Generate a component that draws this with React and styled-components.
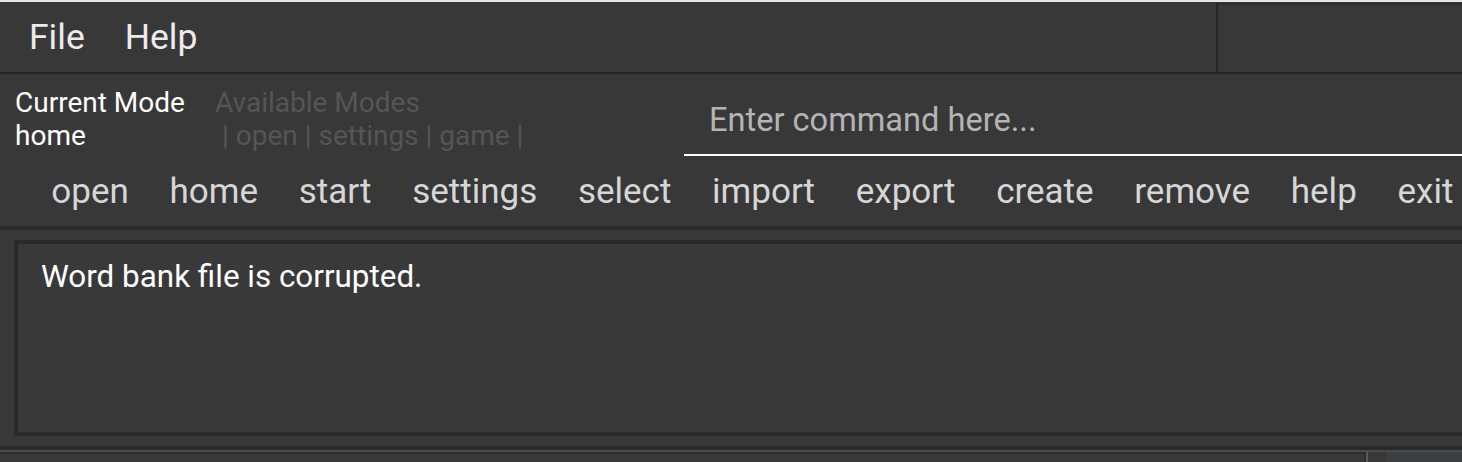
import React from "react";
import styled, { createGlobalStyle } from "styled-components";

const GlobalStyle = createGlobalStyle`
  html, body {
    margin: 0;
    padding: 0;
    background: #383838;
    overflow: hidden;
  }
  body {
    font-family: Roboto, "Liberation Sans", sans-serif;
  }
`;

const MODES = ["open", "settings", "game"];
const COMMANDS = [
  "open",
  "home",
  "start",
  "settings",
  "select",
  "import",
  "export",
  "create",
  "remove",
  "help",
  "exit",
];

export default function App() {
  return (
    <Window>
      <GlobalStyle />
      <TopEdge />
      <MenuBar>
        <MenuItems>
          <MenuItem>File</MenuItem>
          <MenuItem>Help</MenuItem>
        </MenuItems>
        <MenuSide />
      </MenuBar>

      <Toolbar>
        <TopRow>
          <ModeInfo>
            <ModeText>Current Mode</ModeText>
            <ModeText muted>Available Modes</ModeText>
            <ModeText>home</ModeText>
            <ModeText muted indent>
              | {MODES.join(" | ")} |
            </ModeText>
          </ModeInfo>
          <CommandBox>
            <CommandInput placeholder="Enter command here..." />
          </CommandBox>
        </TopRow>
        <ButtonRow>
          {COMMANDS.map((c) => (
            <CommandButton key={c}>{c}</CommandButton>
          ))}
        </ButtonRow>
      </Toolbar>

      <ResultArea>
        <ResultBox>Word bank file is corrupted.</ResultBox>
      </ResultArea>

      <StatusArea>
        <StatusBox />
        <StatusDivider />
        <StatusGap />
        <StatusBlock />
      </StatusArea>
    </Window>
  );
}

const Window = styled.div`
  width: 1462px;
  height: 462px;
  overflow: hidden;
  background: #383838;
  display: flex;
  flex-direction: column;
`;

const TopEdge = styled.div`
  height: 2px;
  flex: 0 0 2px;
  background: #e4e4e4;
`;

const MenuBar = styled.div`
  display: flex;
  height: 70px;
  flex: 0 0 auto;
  border-bottom: 2px solid #262626;
`;

const MenuItems = styled.div`
  width: 1216px;
  display: flex;
  align-items: center;
  padding-left: 9px;
  box-sizing: border-box;
`;

const MenuItem = styled.span`
  padding: 0 20px;
  color: #ececec;
  font-size: 35.5px;
  line-height: 70px;
`;

const MenuSide = styled.div`
  flex: 1;
  border-left: 2px solid #262626;
  border-top: 2px solid #2c2c2c;
  margin-top: 1px;
`;

const Toolbar = styled.div`
  height: 152px;
  flex: 0 0 auto;
  border-bottom: 4px solid #2a2a2a;
  display: flex;
  flex-direction: column;
`;

const TopRow = styled.div`
  display: flex;
  height: 86px;
`;

const ModeInfo = styled.div`
  flex: 0 0 669px;
  padding: 12px 0 0 15px;
  display: grid;
  grid-template-columns: 200px auto;
  grid-auto-rows: 33px;
  align-content: start;
`;

const ModeText = styled.div`
  font-size: 28px;
  line-height: 33px;
  color: ${(p) => (p.muted ? "#555555" : "#ffffff")};
  padding-left: ${(p) => (p.indent ? "7px" : "0")};
  white-space: pre;
`;

const CommandBox = styled.div`
  flex: 1;
  height: 80px;
  border-bottom: 2px solid #ffffff;
  display: flex;
`;

const CommandInput = styled.input`
  flex: 1;
  background: transparent;
  border: none;
  outline: none;
  padding: 12px 0 0 25px;
  font-family: Roboto, "Liberation Sans", sans-serif;
  font-size: 32.6px;
  color: #ffffff;

  &::placeholder {
    color: #b4b4b4;
  }
`;

const ButtonRow = styled.div`
  flex: 1;
  display: flex;
  align-items: center;
  padding: 0 0 0 31px;
  white-space: nowrap;
`;

const CommandButton = styled.span`
  padding: 0 20.35px 4px;
  font-size: 35px;
  color: #d6d6d6;
`;

const ResultArea = styled.div`
  padding: 10px 0 10px 14px;
  flex: 0 0 auto;
`;

const ResultBox = styled.div`
  height: 196px;
  border: 4px solid #2a2a2a;
  border-right: none;
  background: #393939;
  padding: 14px 0 0 23px;
  box-sizing: border-box;
  color: #ffffff;
  font-size: 31.4px;
`;

const StatusArea = styled.div`
  flex: 1;
  border-top: 4px solid #2a2a2a;
  padding-top: 2px;
  display: flex;
  box-shadow: inset 0 2px 0 #4a4a4a;
`;

const StatusBox = styled.div`
  width: 1366px;
  border-top: 2px solid #2c2c2c;
  border-right: 2px solid #2c2c2c;
  box-sizing: border-box;
`;

const StatusDivider = styled.div`
  width: 2px;
  background: #5a5a5a;
`;

const StatusGap = styled.div`
  width: 18px;
`;

const StatusBlock = styled.div`
  flex: 1;
  background: #3d3e42;
`;
